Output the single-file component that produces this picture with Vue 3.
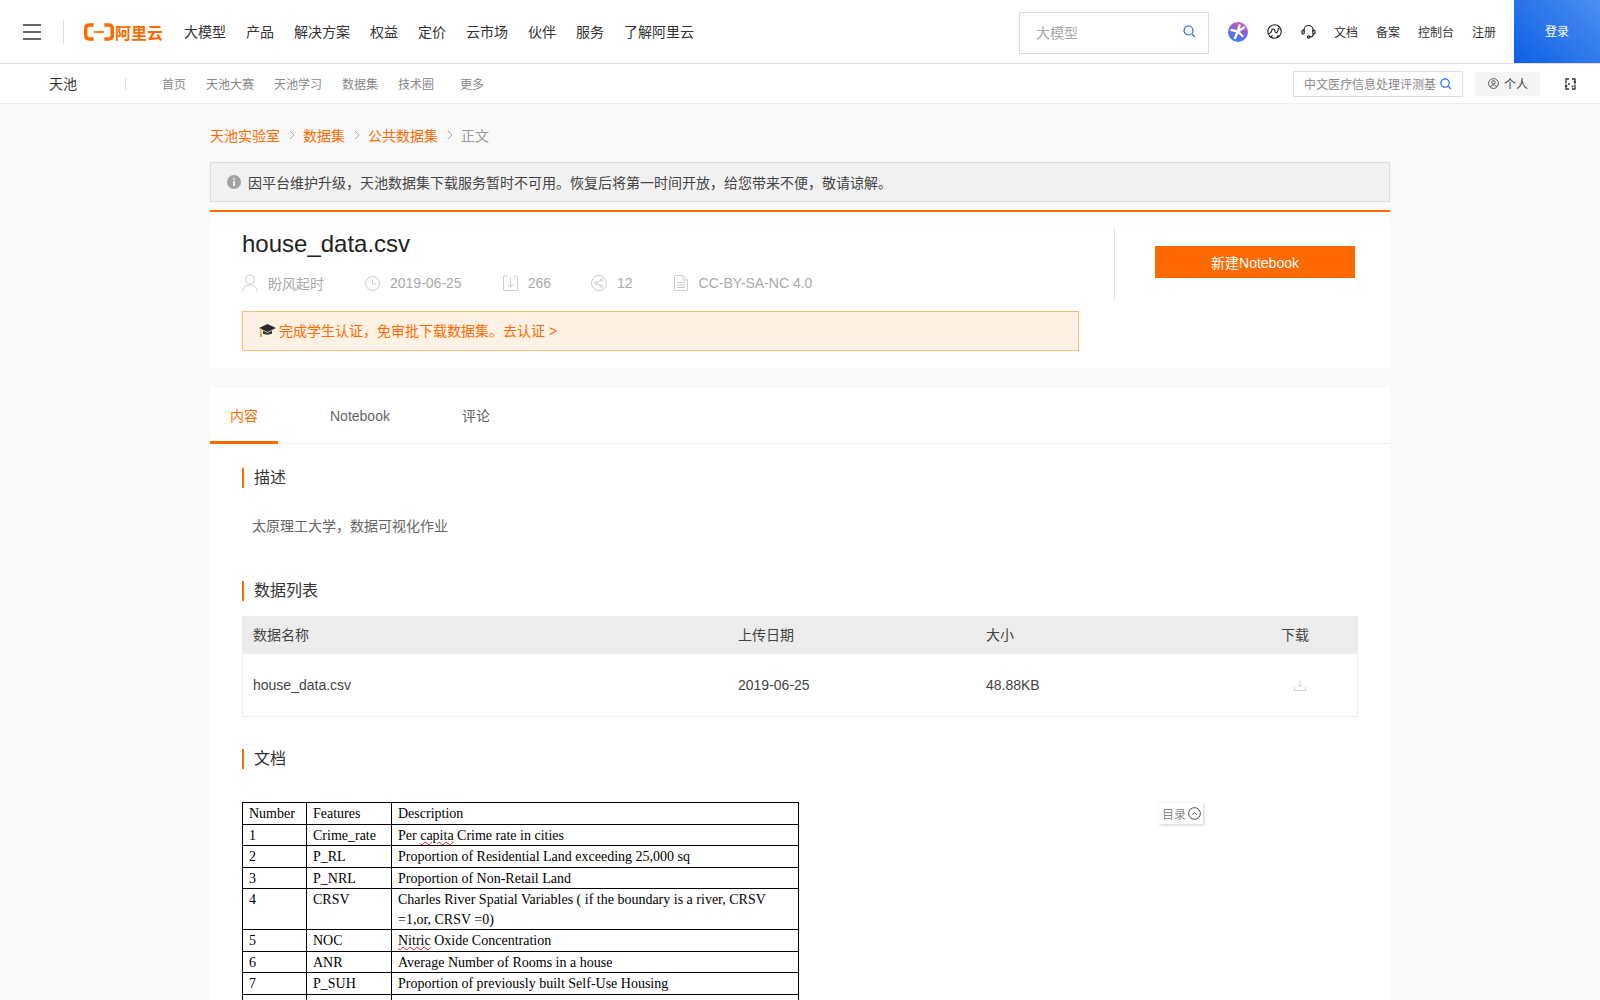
<template>
  <div class="page">
    <!-- top bar -->
    <header class="topbar">
      <div class="burger"><i></i><i></i><i></i></div>
      <span class="top-divider"></span>
      <div class="logo">
        <svg width="31" height="18" viewBox="0 0 31 18">
          <path d="M10 1.800H5.500C3.200 1.800 1.800 3.200 1.800 5v8c0 1.800 1.400 3.200 3.700 3.200H10" fill="none" stroke="#ff6a00" stroke-width="3.600" />
          <path d="M21 1.800h4.500c2.300 0 3.700 1.400 3.700 3.200v8c0 1.800-1.400 3.200-3.700 3.200H21" fill="none" stroke="#ff6a00" stroke-width="3.600" />
          <path d="M10.500 9h10" stroke="#ff6a00" stroke-width="1.800" />
        </svg>
        <span>阿里云</span>
      </div>
      <nav class="main-nav">
        <a v-for="item in mainNav" :key="item">{{ item }}</a>
      </nav>
      <div class="top-right">
        <div class="top-search">
          <span>大模型</span>
          <svg width="13" height="13" viewBox="0 0 13 13"><circle cx="5.500" cy="5.500" r="4.500" fill="none" stroke="#1b6ef3" stroke-width="1.200" /><path d="M9 9l3 3" stroke="#1b6ef3" stroke-width="1.200" /></svg>
        </div>
        <svg class="star" width="20" height="20" viewBox="0 0 20 20">
          <defs>
            <linearGradient id="starGrad" x1="0.700" y1="0" x2="0.300" y2="1">
              <stop offset="0" stop-color="#d85aa8" />
              <stop offset="0.500" stop-color="#7a62e0" />
              <stop offset="1" stop-color="#2f86ee" />
            </linearGradient>
          </defs>
          <circle cx="10" cy="10" r="10" fill="url(#starGrad)" />
          <path d="M11.500 3.500L9.800 9.500M3.500 8l6.300 1.500M16 5.500L9.800 9.500M9.800 9.500l4.700 4.500M9.800 9.500L7 16" stroke="#fff" stroke-width="2.400" stroke-linecap="round" />
        </svg>
        <svg class="globe" width="15" height="15" viewBox="0 0 15 15" fill="none" stroke="#222" stroke-width="1.100">
          <circle cx="7.500" cy="7.500" r="6.700" />
          <path d="M1.200 9.500c1.800.5 2.800-1 3.300-2.500s1.200-2.500 2.500-1.800.6 3 1.800 3.400 2-1 2.200-2.600.6-2 1.500-1.700" />
          <path d="M4 13l1.500-1.800M10 13.500c.2-1 .7-1.800 1.500-2.300" />
        </svg>
        <svg class="headset" width="15" height="15" viewBox="0 0 15 15" fill="none" stroke="#222" stroke-width="1.200">
          <path d="M3 7.500V6a4.500 4.500 0 0 1 9 0v1.500" />
          <rect x="1" y="6" width="2.200" height="4" rx="1" />
          <rect x="11.800" y="6" width="2.200" height="4" rx="1" />
          <path d="M12.500 10c-.3 2-1.800 3-3.500 3" />
          <circle cx="7.700" cy="13" r="1.200" />
        </svg>
        <a class="top-link first">文档</a>
        <a class="top-link">备案</a>
        <a class="top-link">控制台</a>
        <a class="top-link">注册</a>
        <div class="login">登录</div>
      </div>
    </header>

    <!-- tianchi bar -->
    <div class="subbar">
      <span class="sub-brand">天池</span>
      <span class="sub-divider"></span>
      <nav class="sub-nav">
        <a v-for="item in subNav" :key="item">{{ item }}</a>
        <a class="more">更多</a>
      </nav>
      <div class="sub-right">
        <div class="sub-search">
          <span>中文医疗信息处理评测基</span>
          <svg width="12" height="12" viewBox="0 0 13 13"><circle cx="5.500" cy="5.500" r="4.500" fill="none" stroke="#1b6ef3" stroke-width="1.300" /><path d="M9 9l3 3" stroke="#1b6ef3" stroke-width="1.300" /></svg>
        </div>
        <div class="personal">
          <svg width="11" height="11" viewBox="0 0 11 11" fill="none" stroke="#444" stroke-width="0.900">
            <circle cx="5.500" cy="5.500" r="4.900" />
            <circle cx="5.500" cy="4.300" r="1.700" />
            <path d="M2.600 9c.5-1.500 1.600-2.200 2.900-2.200S7.900 7.500 8.400 9" />
          </svg>
          <span>个人</span>
        </div>
        <svg class="swap" width="11" height="12" viewBox="0 0 11 12" fill="none" stroke="#333" stroke-width="1.300">
          <path d="M1 5.500V1h3M7 1h3v3.500" />
          <path d="M10 6.500V11H7M4 11H1V7.500" />
          <path d="M8.800 3.600L10 5l1.200-1.400" fill="#333" />
          <path d="M-.2 8.400L1 7l1.200 1.400" fill="#333" />
          <path d="M3 6h2M6.500 8.500h2" />
        </svg>
      </div>
    </div>

    <main class="main">
      <div class="crumbs">
        <template v-for="(c, i) in crumbs" :key="c">
          <a>{{ c }}</a>
          <svg width="6" height="10" viewBox="0 0 6 10"><path d="M1 1l4 4-4 4" fill="none" stroke="#aaa" /></svg>
          <span v-if="i === crumbs.length - 1">正文</span>
        </template>
      </div>

      <div class="alert">
        <svg width="14" height="14" viewBox="0 0 14 14">
          <circle cx="7" cy="7" r="7" fill="#a3a3a3" />
          <rect x="6.200" y="6" width="1.600" height="5" fill="#fff" />
          <rect x="6.200" y="3.200" width="1.600" height="1.600" fill="#fff" />
        </svg>
        <span>因平台维护升级，天池数据集下载服务暂时不可用。恢复后将第一时间开放，给您带来不便，敬请谅解。</span>
      </div>

      <section class="summary">
        <div class="summary-left">
          <h1>house_data.csv</h1>
          <div class="meta">
            <span class="meta-item author">
              <svg width="16" height="18" viewBox="0 0 16 18" fill="none" stroke="#ccc" stroke-width="1">
                <circle cx="8" cy="5.500" r="4.500" />
                <path d="M.6 17.500c.3-4 3-6.500 7.400-6.500s7.100 2.500 7.400 6.500" />
              </svg>
              <span>盼风起时</span>
            </span>
            <span class="meta-item date">
              <svg width="15" height="15" viewBox="0 0 15 15" fill="none" stroke="#ccc" stroke-width="1">
                <circle cx="7.500" cy="7.500" r="7" />
                <path d="M7.500 3.500v4.500h4" />
              </svg>
              <span>2019-06-25</span>
            </span>
            <span class="meta-item downloads">
              <svg width="15" height="16" viewBox="0 0 15 16" fill="none" stroke="#ccc" stroke-width="1">
                <path d="M4.500 1H1.200a.7.7 0 0 0-.7.700v13.100c0 .4.300.7.700.7h12.600c.4 0 .7-.3.700-.7V1.700a.7.700 0 0 0-.7-.7h-3.300" />
                <path d="M7.500 3v9M4.500 9l3 3 3-3" />
              </svg>
              <span>266</span>
            </span>
            <span class="meta-item shares">
              <svg width="16" height="16" viewBox="0 0 16 16" fill="none" stroke="#ccc" stroke-width="1">
                <circle cx="8" cy="8" r="7.500" />
                <circle cx="4.800" cy="8.300" r="1.300" />
                <circle cx="10.700" cy="5" r="1.300" />
                <circle cx="10.700" cy="11" r="1.300" />
                <path d="M5.900 7.600l3.700-2M5.900 9l3.700 1.500" />
              </svg>
              <span>12</span>
            </span>
            <span class="meta-item license">
              <svg width="14" height="16" viewBox="0 0 14 16" fill="none" stroke="#ccc" stroke-width="1">
                <path d="M.5 1.200c0-.4.300-.7.700-.7h7.800l4.500 4.500v9.800c0 .4-.3.700-.7.700H1.200a.7.700 0 0 1-.7-.7z" />
                <path d="M9 .5V5h4.500M3 7.500h8M3 10h8M3 12.500h8" />
              </svg>
              <span>CC-BY-SA-NC 4.0</span>
            </span>
          </div>
          <div class="notice">
            <svg width="17" height="16" viewBox="0 0 17 16">
              <path d="M8.500 2L17 6l-8.500 4L0 6z" fill="#2b2b2b" />
              <path d="M4 8.500v3c1 1.500 8 1.500 9 0v-3l-4.500 2.200z" fill="#3a3a3a" />
              <path d="M2 6.500v6" stroke="#d9a21b" stroke-width="1.200" />
              <rect x="1.200" y="12" width="1.700" height="3" fill="#d9a21b" />
            </svg>
            <a>完成学生认证，免审批下载数据集。去认证 &gt;</a>
          </div>
        </div>
        <div class="summary-right">
          <button class="new-btn">新建Notebook</button>
        </div>
      </section>

      <section class="content">
        <div class="tabs">
          <a v-for="(t, i) in tabs" :key="t" class="tab" :class="{ active: i === 0 }">{{ t }}</a>
        </div>

        <div class="body">
          <h3 class="sec-title">描述</h3>
          <p class="desc">太原理工大学，数据可视化作业</p>

          <h3 class="sec-title list-title">数据列表</h3>
          <div class="files">
            <div class="files-row head">
              <span>数据名称</span><span>上传日期</span><span>大小</span><span>下载</span>
            </div>
            <div class="files-row">
              <span>house_data.csv</span><span>2019-06-25</span><span>48.88KB</span>
              <span class="dl">
                <svg width="12" height="12" viewBox="0 0 12 12" fill="none" stroke="#d4d4d4">
                  <path d="M6 1v6.500M4.200 6L6 8l1.800-2" />
                  <path d="M.5 8v3.500h11V8" />
                </svg>
              </span>
            </div>
          </div>

          <h3 class="sec-title doc-title">文档</h3>
          <div class="doc">
            <table class="doc-table">
              <colgroup>
                <col class="c1" /><col class="c2" /><col class="c3" />
              </colgroup>
              <tbody>
                <tr>
                  <td>Number</td><td>Features</td><td>Description</td>
                </tr>
                <tr>
                  <td>1</td><td>Crime_rate</td>
                  <td>Per <span class="spell">capita</span> Crime rate in cities</td>
                </tr>
                <tr>
                  <td>2</td><td>P_RL</td><td>Proportion of Residential Land exceeding 25,000 sq</td>
                </tr>
                <tr>
                  <td>3</td><td>P_NRL</td><td>Proportion of Non-Retail Land</td>
                </tr>
                <tr>
                  <td>4</td><td>CRSV</td><td>Charles River Spatial Variables ( if the boundary is a river, CRSV =1,or, CRSV =0)</td>
                </tr>
                <tr>
                  <td>5</td><td>NOC</td>
                  <td><span class="spell">Nitric</span> Oxide Concentration</td>
                </tr>
                <tr>
                  <td>6</td><td>ANR</td><td>Average Number of Rooms in a house</td>
                </tr>
                <tr>
                  <td>7</td><td>P_SUH</td><td>Proportion of previously built Self-Use Housing</td>
                </tr>
                <tr>
                  <td>&nbsp;</td><td></td><td></td>
                </tr>
              </tbody>
            </table>
            <div class="toc">
              <span>目录</span>
              <svg width="13" height="13" viewBox="0 0 12 12" fill="none" stroke="#444" stroke-width="0.900">
                <circle cx="6" cy="6" r="5.400" />
                <path d="M4 7l2-2 2 2" />
              </svg>
            </div>
          </div>
        </div>
      </section>
    </main>
  </div>
</template>

<script setup>
const mainNav = ["大模型", "产品", "解决方案", "权益", "定价", "云市场", "伙伴", "服务", "了解阿里云"];
const subNav = ["首页", "天池大赛", "天池学习", "数据集", "技术圈"];
const crumbs = ["天池实验室", "数据集", "公共数据集"];
const tabs = ["内容", "Notebook", "评论"];
</script>

<style>
html,
body {
  margin: 0;
  background: #f9f9f9;
}
</style>

<style scoped>
.page {
  height: 100vh;
  overflow: hidden;
  background: #f9f9f9;
  font-family: "Liberation Sans", "Noto Sans CJK SC", sans-serif;
  font-size: 14px;
  color: #333;
}

/* top bar */
.topbar {
  display: flex;
  align-items: center;
  height: 63px;
  background: #fff;
  border-bottom: 1px solid #ddd;
}
.burger {
  display: flex;
  flex-direction: column;
  justify-content: space-between;
  width: 18px;
  height: 16px;
  margin-left: 23px;
}
.burger i {
  display: block;
  height: 2px;
  background: #666;
}
.top-divider {
  width: 1px;
  height: 24px;
  margin-left: 22px;
  background: #ddd;
}
.logo {
  display: flex;
  align-items: center;
  gap: 1px;
  width: 79px;
  margin-left: 20px;
  color: #ff6a00;
  font-size: 16px;
  font-weight: 700;
  white-space: nowrap;
}
.main-nav {
  display: flex;
  gap: 20px;
  margin: 0 0 2px 21px;
  color: #333;
  white-space: nowrap;
}
.top-right {
  display: flex;
  align-items: center;
  margin-left: auto;
}
.top-search {
  display: flex;
  align-items: center;
  justify-content: space-between;
  box-sizing: border-box;
  width: 190px;
  height: 42px;
  margin-top: 2px;
  padding: 0 12px 2px 16px;
  border: 1px solid #ddd;
  color: #aaa;
}
.star {
  margin-left: 19px;
}
.globe {
  margin-left: 19px;
}
.headset {
  margin-left: 19px;
}
.top-link {
  margin-left: 18px;
  font-size: 12px;
  color: #333;
}
.top-link.first {
  margin-left: 18px;
}
.login {
  width: 86px;
  height: 63px;
  margin-left: 18px;
  background: linear-gradient(45deg, #0d5fe4, #4c8ff3);
  color: #fff;
  font-size: 12px;
  line-height: 65px;
  text-align: center;
}

/* tianchi bar */
.subbar {
  display: flex;
  align-items: center;
  height: 39px;
  background: #fff;
  border-bottom: 1px solid #eee;
}
.sub-brand {
  margin: 0 0 2px 49px;
  color: #333;
}
.sub-divider {
  width: 1px;
  height: 12px;
  margin-left: 48px;
  background: #ddd;
}
.sub-nav {
  display: flex;
  gap: 20px;
  margin-left: 36px;
  font-size: 12px;
  color: #888;
}
.sub-nav .more {
  margin-left: 6px;
}
.sub-right {
  display: flex;
  align-items: center;
  margin-left: auto;
}
.sub-search {
  display: flex;
  align-items: center;
  justify-content: space-between;
  box-sizing: border-box;
  width: 170px;
  height: 26px;
  padding: 0 10px 0 10px;
  border: 1px solid #ddd;
  font-size: 12px;
  color: #888;
  white-space: nowrap;
}
.personal {
  display: flex;
  align-items: center;
  gap: 5px;
  box-sizing: border-box;
  width: 65px;
  height: 24px;
  margin-left: 12px;
  padding-left: 13px;
  background: #f5f5f5;
  font-size: 12px;
  color: #444;
}
.swap {
  margin: 0 24px 0 25px;
}

/* main */
.main {
  width: 1180px;
  margin: 0 auto;
}
.crumbs {
  display: flex;
  align-items: center;
  height: 20px;
  padding-top: 21px;
  color: #ff6a00;
  white-space: nowrap;
}
.crumbs svg {
  margin: 0 8px 0 9px;
}
.crumbs span {
  color: #999;
}
.alert {
  display: flex;
  align-items: center;
  gap: 7px;
  box-sizing: border-box;
  height: 40px;
  margin-top: 17px;
  padding: 0 0 1px 16px;
  background: #f2f2f2;
  border: 1px solid #ddd;
  color: #444;
}
.summary {
  display: flex;
  box-sizing: border-box;
  height: 158px;
  margin-top: 8px;
  padding: 16px 0 0 32px;
  background: #fff;
  border-top: 2px solid #ff6a00;
}
.summary-left {
  width: 837px;
}
h1 {
  margin: 0;
  font-size: 24px;
  font-weight: 400;
  line-height: 32px;
  color: #222;
}
.meta {
  display: flex;
  align-items: center;
  height: 24px;
  margin-top: 11px;
  color: #aaa;
}
.meta-item {
  display: flex;
  align-items: center;
  gap: 10px;
}
.date {
  margin-left: 41px;
}
.downloads {
  margin-left: 41px;
}
.shares {
  margin-left: 40px;
}
.license {
  margin-left: 41px;
  gap: 11px;
}
.notice {
  display: flex;
  align-items: center;
  gap: 3px;
  box-sizing: border-box;
  height: 40px;
  margin-top: 16px;
  padding: 0 0 2px 16px;
  background: #fff2e5;
  border: 1px solid #ffbb77;
  color: #ff6a00;
}
.summary-right {
  box-sizing: border-box;
  width: 276px;
  height: 73px;
  margin-left: 35px;
  padding: 18px 0 0 40px;
  border-left: 1px solid #e5e5e5;
}
.new-btn {
  display: block;
  width: 200px;
  height: 32px;
  padding: 0;
  background: #ff6a00;
  border: none;
  color: #fff;
  font-family: inherit;
  font-size: 14px;
}

/* content */
.content {
  margin-top: 20px;
  background: #fff;
}
.tabs {
  display: flex;
  height: 55px;
  border-bottom: 1px solid #eee;
}
.tab {
  display: block;
  box-sizing: border-box;
  height: 56px;
  padding: 0 20px;
  line-height: 56px;
  color: #666;
  margin-right: 32px;
}
.tab.active {
  color: #ff6a00;
  border-bottom: 3px solid #ff6a00;
}
.body {
  padding: 24px 32px 0;
}
.sec-title {
  height: 20px;
  margin: 0;
  padding-left: 10px;
  border-left: 2px solid #ff6a00;
  font-size: 16px;
  font-weight: 400;
  line-height: 20px;
  color: #333;
}
.desc {
  margin: 28px 0 0 10px;
  color: #666;
  line-height: 20px;
}
.list-title {
  margin-top: 45px;
}
.files {
  margin-top: 15px;
  border: 1px solid #eee;
  border-top: none;
}
.files-row {
  display: grid;
  grid-template-columns: 485px 248px 295px 1fr;
  align-items: center;
  height: 62px;
  padding-left: 10px;
  color: #444;
}
.files-row.head {
  height: 38px;
  margin: 0 -1px;
  padding: 0 0 2px 11px;
  box-sizing: border-box;
  background: #ececec;
}
.dl {
  display: flex;
  padding-left: 13px;
}
.doc-title {
  margin-top: 32px;
}
.doc {
  position: relative;
  padding-top: 33px;
}
.doc-table {
  table-layout: fixed;
  width: 557px;
  border-collapse: collapse;
  font-family: "Liberation Serif", serif;
  font-size: 14px;
  color: #000;
}
.doc-table td {
  padding: 1px 6px 0;
  border: 1px solid #000;
  vertical-align: top;
  line-height: 19.500px;
}
.c1 {
  width: 64px;
}
.c2 {
  width: 85px;
}
.spell {
  text-decoration: underline wavy #e02020;
  text-decoration-thickness: 1px;
}
.toc {
  position: absolute;
  top: 34px;
  left: 917px;
  display: flex;
  align-items: center;
  gap: 2px;
  height: 21px;
  padding: 0 2px 0 3px;
  background: #fff;
  box-shadow: 1px 1px 3px rgba(0, 0, 0, 0.2);
  font-size: 12px;
  color: #888;
}
</style>
